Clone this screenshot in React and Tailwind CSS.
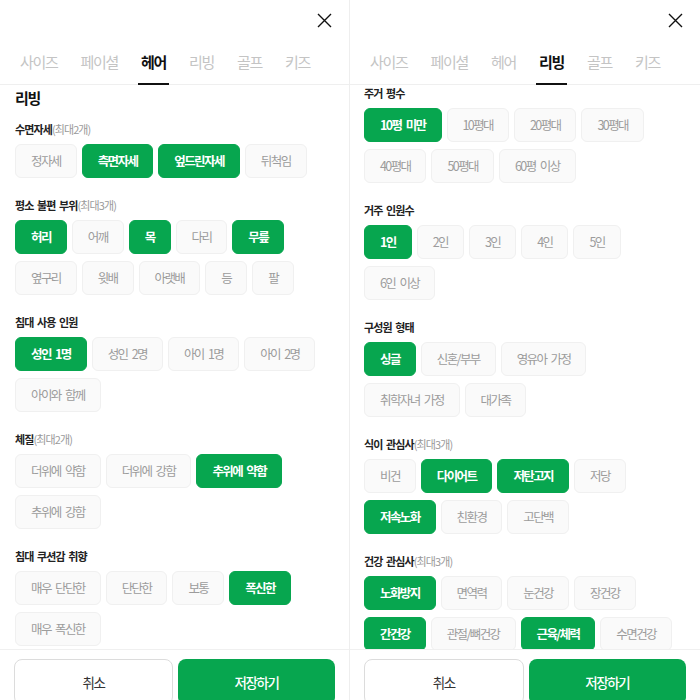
import React from 'react';

const TABS = ['사이즈', '페이셜', '헤어', '리빙', '골프', '키즈'];

const LEFT = [
  {
    label: '수면자세',
    limit: '(최대2개)',
    rows: [[['정자세'], ['측면자세', 1], ['엎드린자세', 1], ['뒤척임']]],
  },
  {
    label: '평소 불편 부위',
    limit: '(최대3개)',
    rows: [
      [['허리', 1], ['어깨'], ['목', 1], ['다리'], ['무릎', 1]],
      [['옆구리'], ['윗배'], ['아랫배'], ['등'], ['팔']],
    ],
  },
  {
    label: '침대 사용 인원',
    rows: [
      [['성인 1명', 1], ['성인 2명'], ['아이 1명'], ['아이 2명']],
      [['아이와 함께']],
    ],
  },
  {
    label: '체질',
    limit: '(최대2개)',
    rows: [
      [['더위에 약함'], ['더위에 강함'], ['추위에 약함', 1]],
      [['추위에 강함']],
    ],
  },
  {
    label: '침대 쿠션감 취향',
    rows: [
      [['매우 단단한'], ['단단한'], ['보통'], ['폭신한', 1]],
      [['매우 폭신한']],
    ],
  },
];

const RIGHT = [
  {
    label: '주거 평수',
    rows: [
      [['10평 미만', 1], ['10평대'], ['20평대'], ['30평대']],
      [['40평대'], ['50평대'], ['60평 이상']],
    ],
  },
  {
    label: '거주 인원수',
    rows: [
      [['1인', 1], ['2인'], ['3인'], ['4인'], ['5인']],
      [['6인 이상']],
    ],
  },
  {
    label: '구성원 형태',
    rows: [
      [['싱글', 1], ['신혼/부부'], ['영유아 가정']],
      [['취학자녀 가정'], ['대가족']],
    ],
  },
  {
    label: '식이 관심사',
    limit: '(최대3개)',
    rows: [
      [['비건'], ['다이어트', 1], ['저탄고지', 1], ['저당']],
      [['저속노화', 1], ['친환경'], ['고단백']],
    ],
  },
  {
    label: '건강 관심사',
    limit: '(최대3개)',
    rows: [
      [['노화방지', 1], ['면역력'], ['눈건강'], ['장건강']],
      [['간건강', 1], ['관절/뼈건강'], ['근육/체력', 1], ['수면건강']],
    ],
  },
];

const Chip = ({ text, on }) => (
  <button
    className={
      on
        ? 'h-[34px] px-[15px] rounded-md bg-[#07a64f] border border-[#07a64f] text-white font-bold text-[12.5px] tracking-[-1.6px] [word-spacing:3px] whitespace-nowrap'
        : 'h-[34px] px-[15px] rounded-md bg-[#fafafa] border border-[#f0f0f0] text-[#9c9c9c] text-[12.5px] tracking-[-1.6px] [word-spacing:3px] whitespace-nowrap'
    }
  >
    {text}
  </button>
);

const Section = ({ label, limit, rows }) => (
  <div>
    <div className="h-[16px] leading-[16px] text-[11px] tracking-[-0.9px] [word-spacing:2px] text-[#222] font-semibold">
      {label}
      {limit && <span className="font-normal text-[#9a9a9a]">{limit}</span>}
    </div>
    <div className="mt-[7px] flex flex-col gap-[7px]">
      {rows.map((row, i) => (
        <div key={i} className="flex gap-[5px]">
          {row.map(([t, on]) => (
            <Chip key={t} text={t} on={!!on} />
          ))}
        </div>
      ))}
    </div>
  </div>
);

const CloseIcon = () => (
  <svg width="15" height="15" viewBox="0 0 15 15" fill="none" stroke="#111" strokeWidth="1.4">
    <path d="M1 1L14 14M14 1L1 14" />
  </svg>
);

const Panel = ({ active, heading, sections, className, pad }) => (
  <div className={'w-[350px] h-[700px] flex flex-col overflow-hidden bg-white ' + className}>
    <div className="h-[85px] shrink-0 flex flex-col border-b border-[#efefef]">
      <div className="flex justify-end pt-[13px] pr-[17px]">
        <CloseIcon />
      </div>
      <div className="mt-auto -mb-px flex gap-[17px] px-[17px]">
        {TABS.map((t) => (
          <div
            key={t}
            className={
              t === active
                ? 'px-[3px] pb-[11px] border-b-2 border-[#111] text-[15px] leading-[20px] tracking-[-1.3px] font-bold text-[#111]'
                : 'px-[3px] pb-[11px] border-b-2 border-transparent text-[15px] leading-[20px] tracking-[-1.3px] text-[#c4c4c4]'
            }
          >
            {t}
          </div>
        ))}
      </div>
    </div>
    <div className={'flex-1 min-h-0 overflow-hidden ' + pad}>
      {heading && (
        <div className="pt-[3px] mb-[13px] text-[15px] leading-[20px] tracking-[-1.2px] font-bold text-[#111]">{heading}</div>
      )}
      <div className="flex flex-col gap-[19px]">
        {sections.map((s) => (
          <Section key={s.label} {...s} />
        ))}
      </div>
    </div>
    <div className="h-[51px] shrink-0 border-t border-[#f0f0f0] flex gap-[5px] px-[14px] pt-[9px] overflow-hidden">
      <button className="flex-1 h-[46px] shrink-0 rounded-[8px] border border-[#dcdcdc] bg-white text-[13.5px] tracking-[-1.4px] text-[#333]">
        취소
      </button>
      <button className="flex-1 h-[46px] shrink-0 rounded-[8px] bg-[#07a64f] text-[13.5px] tracking-[-1.4px] font-medium text-white">
        저장하기
      </button>
    </div>
  </div>
);

export default function App() {
  return (
    <div className="w-[700px] h-[700px] flex bg-white font-['Noto_Sans_CJK_KR',sans-serif]">
      <Panel active="헤어" heading="리빙" sections={LEFT} className="border-r border-[#eeeeee]" pad="px-[15px]" />
      <Panel active="리빙" sections={RIGHT} pad="px-[14px]" />
    </div>
  );
}
